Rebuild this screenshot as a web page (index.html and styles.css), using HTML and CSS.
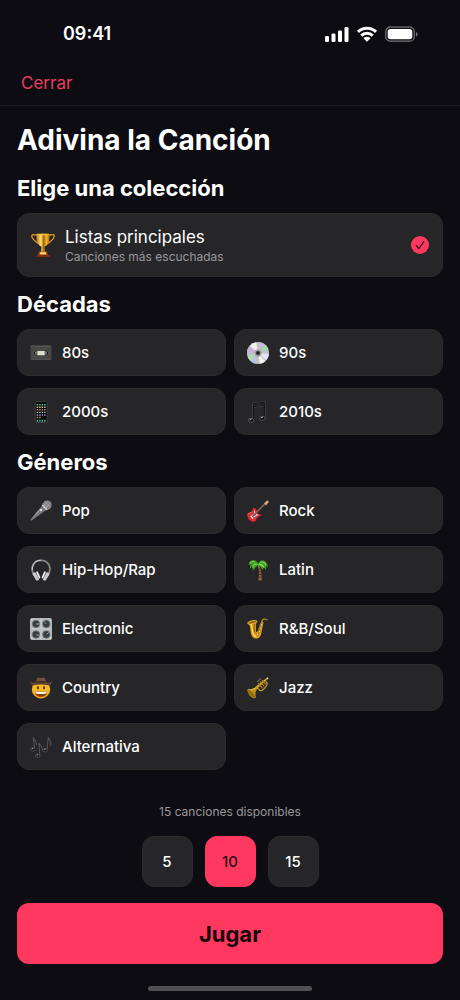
FILE: index.html
```html
<!DOCTYPE html>
<html lang="es">
<head>
  <meta charset="UTF-8">
  <meta name="viewport" content="width=device-width,initial-scale=1">
  <title>Adivina la Canción</title>
  <link rel="stylesheet" href="styles.css">
</head>
<body>
  <div class="status-bar">
    <span class="time">09:41</span>
    <div class="status-icons">
      <svg width="24" height="16" viewBox="0 0 24 16" fill="#fff" aria-hidden="true">
        <rect x="0" y="10" width="4" height="6" rx="1.2"/>
        <rect x="6.5" y="7.5" width="4" height="8.500" rx="1.2"/>
        <rect x="13" y="4.500" width="4" height="11.500" rx="1.2"/>
        <rect x="19.500" y="1" width="4" height="15" rx="1.2"/>
      </svg>
      <svg width="20" height="16" viewBox="0 0 20 16" aria-hidden="true">
        <g fill="none" stroke="#fff" stroke-width="2.900">
          <path d="M1 5.900a13 13 0 0 1 18 0"/>
          <path d="M4.200 9.600a8.500 8.500 0 0 1 11.600 0"/>
        </g>
        <path d="M6.400 12.200a5.200 5.200 0 0 1 7.200 0L10 15.800z" fill="#fff"/>
      </svg>
      <svg width="33" height="16" viewBox="0 0 33 16" aria-hidden="true">
        <rect x="0.700" y="1.200" width="28.600" height="14" rx="4.500" fill="none" stroke="#77777b" stroke-width="1.200"/>
        <rect x="2.700" y="3.100" width="24.600" height="10.200" rx="2.800" fill="#fff"/>
        <path d="M31 6v4.600c2-.8 2-3.800 0-4.600z" fill="#77777b"/>
      </svg>
    </div>
  </div>

  <nav class="navbar">
    <button type="button" class="close">Cerrar</button>
  </nav>

  <form class="quiz">
    <h1>Adivina la Canción</h1>

    <h2>Elige una colección</h2>
    <label class="card featured">
      <input type="radio" name="collection" value="top" checked>
      <svg class="icon" viewBox="0 0 24 24" aria-hidden="true">
        <defs>
          <linearGradient id="gold">
            <stop offset="0" stop-color="#b86d06"/><stop offset=".35" stop-color="#ffe27a"/>
            <stop offset=".55" stop-color="#a86205"/><stop offset=".75" stop-color="#f5b81e"/><stop offset="1" stop-color="#a85c05"/>
          </linearGradient>
        </defs>
        <path d="M6 2.500C3 1.200.6 1.300.8 3.200c.3 3.200 4 5.800 8 8M18 2.500c3-1.300 5.400-1.200 5.200.7-.3 3.200-4 5.800-8 8" fill="none" stroke="#e0a018" stroke-width="1.300"/>
        <path d="M5.200 1h13.600c0 7-1.300 11-5.300 12.700l.5 5.300h-4l.5-5.300C6.500 12 5.200 8 5.200 1z" fill="url(#gold)"/>
        <ellipse cx="12" cy="1.400" rx="6.800" ry=".9" fill="#f4bd35"/>
        <path d="M8 18.500h8l1 4.500H7z" fill="#b94f0c"/>
        <path d="M9 19.300h6v2H9z" fill="#ffe48d"/>
        <path d="M5.200 22h13.600v2H5.200z" fill="#7c2c0b"/>
      </svg>
      <span class="text">
        <span class="name">Listas principales</span>
        <span class="detail">Canciones más escuchadas</span>
      </span>
      <svg class="check" viewBox="0 0 18 18" aria-hidden="true">
        <circle cx="9" cy="9" r="9" fill="#ff3860"/>
        <path d="M5.300 9.600l2.500 3L12.700 5.800" fill="none" stroke="#2b0d17" stroke-width="1.200" stroke-linecap="round" stroke-linejoin="round"/>
      </svg>
    </label>

    <h2>Décadas</h2>
    <div class="grid">
      <label class="card">
        <input type="radio" name="collection" value="80s">
        <svg class="icon" viewBox="0 0 24 24" aria-hidden="true">
          <rect x=".5" y="4" width="23" height="15.500" rx="1" fill="#454545"/>
          <path d="M1 4.500h22" stroke="#666"/>
          <path d="M1 18.800h22" stroke="#555"/>
          <rect x="2.500" y="8" width="19" height="8" rx="3.500" fill="#262522" stroke="#666" stroke-width=".7"/>
          <circle cx="6" cy="12" r="2.500" fill="#151515" stroke="#888" stroke-width=".6"/>
          <circle cx="18" cy="12" r="2.500" fill="#151515" stroke="#888" stroke-width=".6"/>
          <rect x="8" y="9.600" width="8" height="5" fill="#dedccb"/>
          <path d="M6.500 10.500v3M17.500 10.500v3" stroke="#ddd"/>
        </svg>
        <span class="name">80s</span>
      </label>
      <label class="card">
        <input type="radio" name="collection" value="90s">
        <svg class="icon" viewBox="0 0 24 24" aria-hidden="true">
          <circle cx="12" cy="12" r="12" fill="#c3c2c5"/>
          <path d="M12 12L3 4A12 12 0 0 1 10 .2z" fill="#f3f2ec"/>
          <path d="M12 12L14 .2a12 12 0 0 1 5 2.200z" fill="#cbb5e6"/>
          <path d="M12 12L19 2.300A12 12 0 0 1 23.500 8z" fill="#a2d8b0"/>
          <path d="M12 12l11.900 1A12 12 0 0 1 21 20z" fill="#e8e3f4"/>
          <path d="M12 12l8 9a12 12 0 0 1-6 2.800z" fill="#f2f2e8"/>
          <path d="M12 12L9 23.600a12 12 0 0 1-5-2.700z" fill="#b7c3e9"/>
          <path d="M12 12l-8 9A12 12 0 0 1 .6 16z" fill="#b3ddb1"/>
          <path d="M12 12L.1 11A12 12 0 0 1 2 5z" fill="#c5b2d8"/>
          <circle cx="12" cy="12" r="4" fill="#aaa6a9"/>
          <circle cx="12" cy="12" r="2.200" fill="#1b1b1c" stroke="#666" stroke-width=".7"/>
        </svg>
        <span class="name">90s</span>
      </label>
      <label class="card">
        <input type="radio" name="collection" value="2000s">
        <svg class="icon" viewBox="0 0 24 24" aria-hidden="true">
          <rect x="5.700" y=".5" width="13" height="23" rx="1.500" fill="#080b0d" stroke="#555" stroke-width=".7"/>
          <g stroke-width="1.600" stroke-dasharray="1.600 1.100" fill="none">
            <path d="M7.300 4h10" stroke="#63bd92"/>
            <path d="M7.300 6.800h10" stroke="#d6c89b"/>
            <path d="M7.300 9.600h10" stroke="#be8266"/>
            <path d="M7.300 12.400h10" stroke="#b8c4bd"/>
            <path d="M7.300 15.200h10" stroke="#9b91b8"/>
            <path d="M7.300 18h5" stroke="#b49771"/>
            <path d="M7.300 21.500h10" stroke="#49b799" stroke-width="2"/>
          </g>
        </svg>
        <span class="name">2000s</span>
      </label>
      <label class="card">
        <input type="radio" name="collection" value="2010s">
        <svg class="icon" viewBox="0 0 24 24" aria-hidden="true">
          <path d="M6.700 21V2.700L19.500.8v17.500M6.700 6.700l12.800-2" fill="none" stroke="#505052" stroke-width="1.500"/>
          <path d="M7.100 21V3L19 1.300v17M7.100 6.300L19 4.500" fill="none" stroke="#121213" stroke-width="1.100"/>
          <ellipse cx="4.500" cy="21" rx="3" ry="2.300" fill="#161617" stroke="#626264" stroke-width=".8"/>
          <ellipse cx="16.800" cy="19" rx="3" ry="2.300" fill="#161617" stroke="#626264" stroke-width=".8"/>
          <path d="M3 20.300l2-.8M15.300 18.300l2-.8" stroke="#ccc"/>
        </svg>
        <span class="name">2010s</span>
      </label>
    </div>

    <h2>Géneros</h2>
    <div class="grid">
      <label class="card">
        <input type="radio" name="collection" value="pop">
        <svg class="icon" viewBox="0 0 24 24" aria-hidden="true">
          <path d="M13.300 6.500l4.500 4.500L1.500 22.500l-1-1z" fill="#767678"/>
          <path d="M13 7L.5 21.500 9.500 13z" fill="#a9a9ab"/>
          <circle cx="18.700" cy="5.500" r="5" fill="#7d7d80"/>
          <path d="M14.200 3.500l6.500 6.500M16 1.500l6.800 6.800M22.500 2.500L17 9M20 1l-5.500 6" stroke="#b5b5b8" stroke-width=".7"/>
          <path d="M13.200 5.500l5.500 5.500" stroke="#d2d2d4" stroke-width="1.600"/>
          <circle cx="12" cy="11" r="1.200" fill="#eee"/>
        </svg>
        <span class="name">Pop</span>
      </label>
      <label class="card">
        <input type="radio" name="collection" value="rock">
        <svg class="icon" viewBox="0 0 24 24" aria-hidden="true">
          <path d="M7.500 8.500c-1.800 1-1.200 3.200-2.700 4.500-1.600 1.300-4.200.5-4.500 3.200-.3 3.800 3.500 8 7.300 7.500 3-.4 2.200-3.500 4-5 1.300-1.100 3.800-.8 4.200-2.300.2-1-2.200-.4-3.300-1.500-1.700-1.500-1.500-5.400-5-6.400z" fill="#e9252f"/>
          <path d="M1 16c.5-2 3-1.600 4.500-3" stroke="#ff7e80" fill="none"/>
          <path d="M8 10.500l1.500 4 3 2-3.500 1.600-3 3-2.500-3.500 4-2.600z" fill="#e8e5e1"/>
          <path d="M6.500 17.500L20 4" stroke="#584640" stroke-width="2"/>
          <path d="M7 16.500L19.500 4" stroke="#c7aea0" stroke-width=".6"/>
          <path d="M18.500 3.800L22 .3l2 1.600-3.200 4z" fill="#d4a681"/>
          <path d="M5 17l2.500 2.500M7.500 14.500L10 17" stroke="#565459"/>
        </svg>
        <span class="name">Rock</span>
      </label>
      <label class="card">
        <input type="radio" name="collection" value="hiphop">
        <svg class="icon" viewBox="0 0 24 24" aria-hidden="true">
          <path d="M4.500 18C-.5 10 3.500 1.500 12 1.500S24.500 10 19.500 18" fill="none" stroke="#858587" stroke-width="2"/>
          <path d="M2.600 12C2.200 5.500 6.200 1.300 12 1.300" fill="none" stroke="#ddd" stroke-width=".9"/>
          <g stroke-linecap="round">
            <path d="M5 16.500l3 5M19 16.500l-3 5" stroke="#c9c9cb" stroke-width="4"/>
            <path d="M7.800 14.500l2.400 5.500M16.200 14.500L13.800 20" stroke="#efefef" stroke-width="2"/>
            <path d="M6.800 15.500l2.700 5.500M17.200 15.500L14.500 21" stroke="#6e6e70" stroke-width=".7"/>
          </g>
        </svg>
        <span class="name">Hip-Hop/Rap</span>
      </label>
      <label class="card">
        <input type="radio" name="collection" value="latin">
        <svg class="icon" viewBox="0 0 24 24" aria-hidden="true">
          <path d="M11.500 7c2.300 5 2 10.500.8 16.500h3.800C15.800 17 15.500 11.500 13 6z" fill="#96643b"/>
          <path d="M12.600 11l2-.5M13.200 14l2-.4M13 17l2.500-.3M12.800 20l3-.3" stroke="#56351f"/>
          <path d="M12 5C8-.8 2.800.6 1.500 6.500l2.300-1-.8 5.200 3-3 .3 5.200c1.800-1.500 2.600-4.200 5.700-5.900 2.500.6 4 2.700 5 5.200l1.200-3.500 2.500 3.400.1-4.400 2.200 1.600C21.800 1.600 16.500-1.200 12 5z" fill="#3b9a25"/>
          <path d="M12 5C8 1 4 2.800 3.200 5M12 5.500C8 5 6.500 7.300 6.300 9.500M12.500 5.500c3-3.500 6.500-2.600 8.500 1M12.500 6c3-.6 5 1.200 6.200 3.200" fill="none" stroke="#8cda55" stroke-width="1.200"/>
          <path d="M8 1.300l4 3.800 4-3.700" fill="none" stroke="#268019" stroke-width="1.500"/>
        </svg>
        <span class="name">Latin</span>
      </label>
      <label class="card">
        <input type="radio" name="collection" value="electronic">
        <svg class="icon" viewBox="0 0 24 24" aria-hidden="true">
          <rect x="0" y="0" width="24" height="24" rx="2.500" fill="#b4b8bb"/>
          <path d="M12 1v22M1 12h22" stroke="#d6d8da" stroke-width=".8"/>
          <g fill="#373b3e" stroke="#72777a" stroke-width=".8">
            <circle cx="6.500" cy="6.500" r="4"/><circle cx="17.800" cy="6.500" r="4"/>
            <circle cx="6.500" cy="18" r="4"/><circle cx="17.800" cy="18" r="4"/>
          </g>
          <path d="M6.500 6.500H10M17.800 6.500l-2.500-2.500M6.500 18l3 1M17.800 18l2.800-2.300" stroke="#a8adaf" stroke-width="1"/>
          <g fill="#f3f3f3"><circle cx="2" cy="2" r=".7"/><circle cx="22" cy="2" r=".7"/><circle cx="2" cy="22" r=".7"/><circle cx="22" cy="22" r=".7"/></g>
        </svg>
        <span class="name">Electronic</span>
      </label>
      <label class="card">
        <input type="radio" name="collection" value="rnb">
        <svg class="icon" viewBox="0 0 24 24" aria-hidden="true">
          <path d="M.8 5.500C3 7.500 3.500 9 3.700 13c.2 5.500 2.500 9.500 6.300 9.500 3.500 0 5-2.500 5.800-6.500L18 4.500l-2.500-1L11.800 14c-.5 1.700-2 1.500-2-.2 0-3.300-.4-6.300.9-10.300C7 2.300 3 3.200.8 5.500z" fill="#d6991e"/>
          <path d="M4 6.500c1.800 2 1.500 6 2.200 9 .7 3 2.500 4.800 4.300 4.500" fill="none" stroke="#ffdc68" stroke-width="1.500"/>
          <path d="M8.300 5.500c-1 4-.5 8 .3 10.500" fill="none" stroke="#8e5b09" stroke-width="1.100"/>
          <ellipse cx="5.800" cy="4.700" rx="5.200" ry="1.700" transform="rotate(-11 5.800 4.700)" fill="#9d670b" stroke="#f5c64a" stroke-width=".8"/>
          <path d="M16.500 5c-.5-3 1-4.200 3-3.700l1.500.5" fill="none" stroke="#c68e1c" stroke-width="1.300"/>
          <path d="M20.500 1.800H23" stroke="#6c6865" stroke-width="1.500"/>
          <path d="M12 15.500L15.500 6" stroke="#8e5b09" stroke-width=".9"/>
          <g fill="#ffe078" stroke="#855408" stroke-width=".5"><circle cx="15.800" cy="7.500" r="1.200"/><circle cx="14.900" cy="11" r="1.200"/><circle cx="13.800" cy="14.500" r="1.200"/><circle cx="11.500" cy="18" r="1.200"/></g>
        </svg>
        <span class="name">R&amp;B/Soul</span>
      </label>
      <label class="card">
        <input type="radio" name="collection" value="country">
        <svg class="icon" viewBox="0 0 24 24" aria-hidden="true">
          <circle cx="12" cy="13.500" r="10" fill="#f9b922"/>
          <path d="M3 17a10 10 0 0 0 18 0c-3 3.500-15 3.500-18 0z" fill="#ed8f13"/>
          <path d="M.3 3.500C1 7 5 6 7 5.500c3-.8 7-.8 10 0 2 .5 6 1.500 6.700-2 .8 4-1.500 6-3.700 5.500-5-1.200-11-1.200-16 0C1.800 9.500-.5 7.500.3 3.500z" fill="#604236"/>
          <path d="M6.500 6.300C7 2 8-.2 10.300.7c1 .4 2.400.4 3.400 0C16-.2 17 2 17.500 6.300c-3.500-1-7.500-1-11 0z" fill="#735040"/>
          <path d="M6.600 5.800c3.500-1 7.300-1 10.800 0" stroke="#382421" stroke-width="1.200" fill="none"/>
          <ellipse cx="8.700" cy="11.700" rx="1.100" ry="1.900" fill="#5b3510"/>
          <ellipse cx="15.300" cy="11.700" rx="1.100" ry="1.900" fill="#5b3510"/>
          <path d="M5.200 15.300c4 1 9.600 1 13.600 0-.8 4.800-3.600 6.300-6.800 6.300s-6-1.500-6.800-6.300z" fill="#7d3d11"/>
          <path d="M5.500 15.500c4 1 9 1 13 0l-.8 2.500c-3.500.8-7.900.8-11.400 0z" fill="#fff5dc"/>
        </svg>
        <span class="name">Country</span>
      </label>
      <label class="card">
        <input type="radio" name="collection" value="jazz">
        <svg class="icon" viewBox="0 0 24 24" aria-hidden="true">
          <path d="M.3 13.500c4.500.5 7.700-1 9.700-3.300L21.500 1l1.200 1L11.700 12.500c-2.700 2.500-3 6-2 9.500-.8 1.600-3 1.300-4.600 0C2.400 20 .3 16.500.3 13.500z" fill="#c4921b"/>
          <path d="M1 13.800c4.500 1 7.500-1 9.500-3.100l10-8" fill="none" stroke="#f7d65f" stroke-width=".8"/>
          <ellipse cx="4.700" cy="18.200" rx="1.900" ry="5.500" transform="rotate(-42 4.700 18.200)" fill="#94680d"/>
          <path d="M9.800 10.500l3.800 3.800c1.500 1 4-.2 5.700-2.200 2-2.200 3.300-4.300 2.400-5.900L19.800 4" fill="none" stroke="#c79621" stroke-width="1.400"/>
          <path d="M12.300 6.300l4.700 6M14.400 4.700l4.600 5.700M16.400 3.200l4.200 5" stroke="#a97e19" stroke-width="1.300"/>
          <path d="M11 5l2-1.700M13.100 3.300l1.800-1.500" stroke="#777" stroke-width="1.100"/>
          <path d="M21 1.500L22.500.3l1.200 1.200-1.500 1.200z" fill="#d7d6cd"/>
        </svg>
        <span class="name">Jazz</span>
      </label>
      <label class="card">
        <input type="radio" name="collection" value="alternativa">
        <svg class="icon" viewBox="0 0 24 24" aria-hidden="true">
          <g fill="none" stroke="#515154" stroke-width="1.200">
            <path d="M5 13.500L3.500 1.500c.7 3 4.500 4.500 3.700 8.500"/>
            <path d="M10.500 20.500L9.800 7.500c.8 3.500 5.200 4 4.200 9"/>
            <path d="M18.500 14.500L20 1c.2 3.500 4.500 4.500 2.200 10"/>
          </g>
          <g fill="#121213" stroke="#606063" stroke-width=".8">
            <ellipse cx="3" cy="14.500" rx="2.500" ry="1.900"/>
            <ellipse cx="8.300" cy="21.500" rx="2.600" ry="1.900"/>
            <ellipse cx="16.500" cy="15.500" rx="2.500" ry="1.900"/>
          </g>
          <path d="M2 14l1.500-.5M7.300 21l1.500-.5M15.500 15l1.500-.5" stroke="#ddd" stroke-width=".8"/>
        </svg>
        <span class="name">Alternativa</span>
      </label>
    </div>

    <div class="footer">
      <p class="available">15 canciones disponibles</p>
      <div class="counts">
        <label class="count"><input type="radio" name="count" value="5">5</label>
        <label class="count"><input type="radio" name="count" value="10" checked>10</label>
        <label class="count"><input type="radio" name="count" value="15">15</label>
      </div>
      <button type="button" class="play">Jugar</button>
    </div>
  </form>
  <div class="home-indicator"></div>
</body>
</html>
```
FILE: styles.css
```css
* { box-sizing: border-box; }
body { display: flex; flex-direction: column; min-height: 100vh; margin: 0; background: #0d0c12; color: #fff; font-family: Inter, "Liberation Sans", sans-serif; }
h1, h2, p { margin: 0; }
button { border: none; font-family: inherit; cursor: pointer; }

.status-bar { display: flex; justify-content: space-between; align-items: center; height: 60px; padding: 8px 42px 0 63px; }
.time { font-size: 18px; font-weight: 600; line-height: 24px; }
.status-icons { display: flex; gap: 8px; }

.navbar { display: flex; align-items: center; height: 46px; padding: 0 21px; border-bottom: 1px solid #1c1b20; }
.close { padding: 0; background: none; color: #e83b60; font-size: 17px; line-height: 24px; }

.quiz { display: flex; flex: 1; flex-direction: column; padding: 13px 17px 0; }
h1 { font-size: 28px; font-weight: 700; line-height: 42px; }
h2 { margin: 11px 0 9px; font-size: 22px; font-weight: 700; line-height: 32px; }

.card { position: relative; display: flex; align-items: center; gap: 10px; height: 47px; padding: 0 12px; border: 1px solid #2c2c2e; border-radius: 12px; background: #262628; cursor: pointer; }
.card input, .count input { position: absolute; margin: 0; opacity: 0; }
.card .name { font-size: 15px; font-weight: 500; line-height: 24px; }
.icon { width: 22px; height: 22px; }
.grid { display: grid; grid-template-columns: 1fr 1fr; gap: 12px 8px; }

.featured { height: 64px; padding: 0 13px; }
.featured .icon { width: 24px; height: 24px; }
.featured .name { font-size: 17px; font-weight: 400; }
.text { display: flex; flex: 1; flex-direction: column; }
.detail { color: #98989c; font-size: 12px; line-height: 16px; }
.check { width: 18px; height: 18px; }

.footer { display: flex; flex-direction: column; align-items: center; margin-top: auto; padding-top: 24px; }
.available { color: #98989c; font-size: 12px; line-height: 16px; }
.counts { display: flex; gap: 12px; margin: 16px 0; }
.count { position: relative; display: flex; align-items: center; justify-content: center; width: 51px; height: 51px; border: 1px solid #2c2c2e; border-radius: 12px; background: #262628; font-size: 15px; font-weight: 500; cursor: pointer; }
.count:has(input:checked) { border-color: #ff3860; background: #ff3860; color: #2b0d17; }
.play { width: 100%; height: 61px; border-radius: 12px; background: #ff3860; color: #16060c; font-size: 22px; font-weight: 700; }

.home-indicator { width: 164px; height: 5px; margin: 22px auto 9px; border-radius: 3px; background: #505052; }
```
